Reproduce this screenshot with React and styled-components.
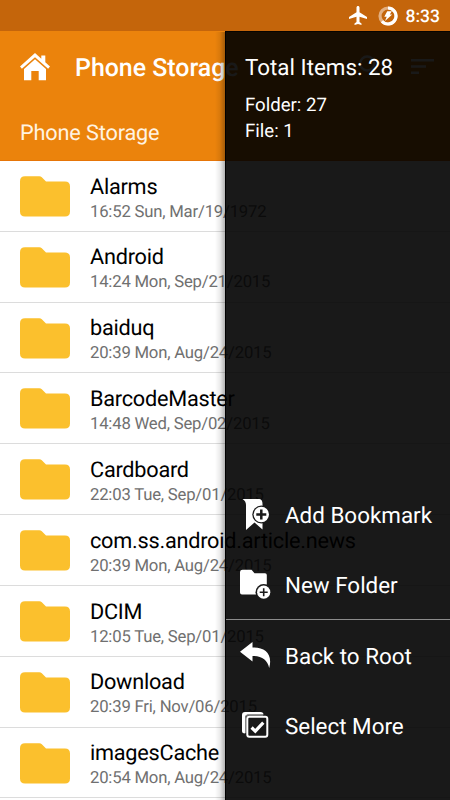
import React from "react";
import styled, { createGlobalStyle } from "styled-components";

const GlobalStyle = createGlobalStyle`
  *, *::before, *::after { box-sizing: border-box; }
  html, body { margin: 0; padding: 0; overflow: hidden; }
  body { font-family: Roboto, sans-serif; background: #fff; text-rendering: geometricPrecision; }
  svg { display: block; flex: none; }
`;

const Screen = styled.div`
  position: relative;
  display: flex;
  flex-direction: column;
  width: 450px;
  height: 800px;
  overflow: hidden;
  background: #fff;
`;

const StatusBar = styled.div`
  display: flex;
  align-items: center;
  justify-content: flex-end;
  flex: none;
  height: 31px;
  padding: 0 10px 0 0;
  background: #c4650b;
`;

const Clock = styled.span`
  margin-left: 8px;
  padding-top: 2px;
  color: #fff;
  font-size: 17.5px;
  font-weight: 500;
  line-height: 20px;
`;

const Header = styled.header`
  flex: none;
  height: 130px;
  background: #eb830c;
  color: #fff;
  border-bottom: 1px solid #e67508;
`;

const Toolbar = styled.div`
  display: flex;
  align-items: center;
  height: 72px;
  padding: 0 16px 0 20px;
`;

const Title = styled.h1`
  flex: 1;
  margin: 0 0 0 25px;
  padding-top: 3px;
  font-size: 24.9px;
  font-weight: 500;
  line-height: 30px;
  white-space: nowrap;
`;

const Actions = styled.div`
  display: flex;
  align-items: center;
  gap: 28px;
`;

const PathLabel = styled.div`
  padding: 16px 20px 0;
  font-size: 21.7px;
  letter-spacing: -0.15px;
  line-height: 29px;
  color: #fff3e2;
`;

const FileList = styled.ul`
  flex: none;
  margin: 0;
  padding: 0;
  list-style: none;
`;

const FileRow = styled.li`
  display: flex;
  height: 70.83px;
  padding-left: 20px;
  border-bottom: 1px solid #dcdcdc;
`;

const FolderSvg = styled.svg`
  margin-top: 15px;
`;

const FileText = styled.div`
  margin-left: 20px;
  padding-top: 12.6px;
  white-space: nowrap;
`;

const FileName = styled.div`
  font-size: 21.7px;
  letter-spacing: -0.24px;
  line-height: 28px;
  color: #000;
`;

const FileDate = styled.div`
  font-size: 16.7px;
  letter-spacing: -0.2px;
  line-height: 22px;
  color: #707070;
`;

const Drawer = styled.aside`
  position: absolute;
  top: 31px;
  right: 0;
  bottom: 0;
  display: flex;
  flex-direction: column;
  width: 225px;
  background: rgba(0, 0, 0, 0.9);
  border-left: 1px solid #000;
  border-top: 1px solid rgba(0, 0, 0, 0.7);
  color: #fff;

  &::before {
    content: "";
    position: absolute;
    top: 0;
    bottom: 0;
    left: -11px;
    width: 10px;
    background: linear-gradient(to right, rgba(0, 0, 0, 0), rgba(0, 0, 0, 0.08) 50%, rgba(0, 0, 0, 0.3));
  }
`;

const Summary = styled.div`
  flex: 1;
  padding: 21px 0 0 19px;
`;

const Total = styled.div`
  margin-bottom: 10px;
  font-size: 22.4px;
  line-height: 30px;
`;

const Count = styled.div`
  font-size: 18.6px;
  line-height: 25.5px;
`;

const Menu = styled.nav`
  display: flex;
  flex-direction: column;
  flex: none;
  padding-bottom: 40px;
`;

const MenuItem = styled.div`
  display: flex;
  align-items: center;
  height: 70px;
  padding-left: 14px;
  font-size: 22.4px;
  line-height: 30px;
  white-space: nowrap;
`;

const MenuLabel = styled.span`
  margin-left: 14px;
  padding-top: 4px;
`;

const MenuDivider = styled.div`
  height: 1px;
  background: #8c8c8c;
`;

const AirplaneIcon = () => (
  <svg width="18" height="20" viewBox="0 0 18 20">
    <path fill="#fff" d="M18 13v-2l-7.5-4.8V1.6C10.500.7 9.800 0 9 0S7.500.7 7.500 1.600V6.200L0 11v2l7.500-2.200V16L5.500 17.400V19L9 18l3.500 1v-1.600L10.500 16v-5.200z" />
  </svg>
);

const BatterySvg = styled.svg`
  margin-left: 11px;
`;

const BatteryIcon = () => (
  <BatterySvg width="20" height="20" viewBox="0 0 20 20">
    <circle cx="10" cy="10" r="8" fill="none" stroke="#e3af80" strokeWidth="3.2" />
    <path d="M10 2a8 8 0 1 1-6 13.300" fill="none" stroke="#fff" strokeWidth="3.2" />
    <path d="M9.200 5.200h4.600l-2 3.300h2.400L7 15l1.700-4.200H6.300z" fill="#fff" />
  </BatterySvg>
);

const HomeIcon = () => (
  <svg width="30" height="28" viewBox="0 0 30 28">
    <path d="M15 0l6.300 5.700V2.600h4v6.700L30 13.500l-1.900 2.200L15 4.200 1.900 15.700 0 13.500z" fill="#fff" />
    <path d="M15 6.300l11 9.600V27.300h-7.300v-9.300h-7.400v9.300H4V15.900z" fill="#fff" />
  </svg>
);

const SearchIcon = () => (
  <svg width="24" height="24" viewBox="0 0 24 24" fill="none" stroke="#fff" strokeWidth="2.4">
    <circle cx="8.200" cy="8.500" r="7" />
    <path d="M13.500 13.500l7 7" />
  </svg>
);

const SortIcon = () => (
  <svg width="23" height="16" viewBox="0 0 23 16" fill="#fff">
    <path d="M0 0h23v2.500H0zM0 6.300h15v2.500H0zM0 12.600h8v2.500H0z" />
  </svg>
);

const FolderIcon = () => (
  <FolderSvg width="50" height="41" viewBox="0 0 50 41">
    <path fill="#fbc02d" d="M5 .3h14.300q1.500 0 2.500 1l4.200 4.200h19q5 0 5 5v25q0 5-5 5H5q-5 0-5-5V5.300q0-5 5-5z" />
  </FolderSvg>
);

const BookmarkAddIcon = () => (
  <svg width="31" height="32" viewBox="0 0 31 32">
    <path d="M2.500 1h17q3 .5 3 5V31.500L14.500 24.500 6 32V7Q6 3 2.500 1z" fill="#fff" />
    <circle cx="21.300" cy="16.500" r="9" fill="#1a1a1a" />
    <circle cx="21.300" cy="16.500" r="7.700" fill="#fff" />
    <path d="M21.300 11.500v10M16.300 16.500h10" stroke="#1a1a1a" strokeWidth="2.500" />
  </svg>
);

const FolderAddIcon = () => (
  <svg width="31" height="30" viewBox="0 0 31 30">
    <path d="M2.500.8h9l3 3.500h10.500q1.800 0 1.800 1.800V23.500q0 2-2 2H2q-2 0-2-2V3Q0 .8 2.500.8z" fill="#fff" />
    <circle cx="23.700" cy="23.200" r="8.200" fill="#1a1a1a" />
    <circle cx="23.700" cy="23.200" r="6.600" fill="#fff" />
    <path d="M23.700 19.200v8M19.700 23.200h8" stroke="#1a1a1a" strokeWidth="1.600" />
  </svg>
);

const BackIcon = () => (
  <svg width="31" height="28" viewBox="0 0 31 28">
    <path d="M0 10.700L12.500 1v5.600C25 6.200 33 13 29.200 27 27.500 19 22 14.800 12.500 15V20.500z" fill="#fff" />
  </svg>
);

const SelectIcon = () => (
  <svg width="31" height="28" viewBox="0 0 31 28">
    <path d="M2 20V4Q2 1 5 1h15.500q3 0 3 2.500H8Q5.200 3.500 5.200 6.500V22.500Q2 22.500 2 20z" fill="#fff" />
    <path d="M5.700 22V6.500Q5.700 4 8 4h15" fill="none" stroke="#969696" strokeWidth="1" />
    <rect x="7.300" y="5.800" width="20" height="20" rx="2" fill="none" stroke="#fff" strokeWidth="2" />
    <path d="M11.600 16.500l3.700 3.700 8-8.500" fill="none" stroke="#fff" strokeWidth="3.200" />
  </svg>
);

const files = [
  ["Alarms", "16:52 Sun, Mar/19/1972"],
  ["Android", "14:24 Mon, Sep/21/2015"],
  ["baiduq", "20:39 Mon, Aug/24/2015"],
  ["BarcodeMaster", "14:48 Wed, Sep/02/2015"],
  ["Cardboard", "22:03 Tue, Sep/01/2015"],
  ["com.ss.android.article.news", "20:39 Mon, Aug/24/2015"],
  ["DCIM", "12:05 Tue, Sep/01/2015"],
  ["Download", "20:39 Fri, Nov/06/2015"],
  ["imagesCache", "20:54 Mon, Aug/24/2015"],
];

export default function App() {
  return (
    <Screen>
      <GlobalStyle />
      <StatusBar>
        <AirplaneIcon />
        <BatteryIcon />
        <Clock>8:33</Clock>
      </StatusBar>
      <Header>
        <Toolbar>
          <HomeIcon />
          <Title>Phone Storage</Title>
          <Actions>
            <SearchIcon />
            <SortIcon />
          </Actions>
        </Toolbar>
        <PathLabel>Phone Storage</PathLabel>
      </Header>
      <FileList>
        {files.map(([name, date]) => (
          <FileRow key={name}>
            <FolderIcon />
            <FileText>
              <FileName>{name}</FileName>
              <FileDate>{date}</FileDate>
            </FileText>
          </FileRow>
        ))}
      </FileList>
      <Drawer>
        <Summary>
          <Total>Total Items: 28</Total>
          <Count>Folder: 27</Count>
          <Count>File: 1</Count>
        </Summary>
        <Menu>
          <MenuItem><BookmarkAddIcon /><MenuLabel>Add Bookmark</MenuLabel></MenuItem>
          <MenuItem><FolderAddIcon /><MenuLabel>New Folder</MenuLabel></MenuItem>
          <MenuDivider />
          <MenuItem><BackIcon /><MenuLabel>Back to Root</MenuLabel></MenuItem>
          <MenuItem><SelectIcon /><MenuLabel>Select More</MenuLabel></MenuItem>
        </Menu>
      </Drawer>
    </Screen>
  );
}
